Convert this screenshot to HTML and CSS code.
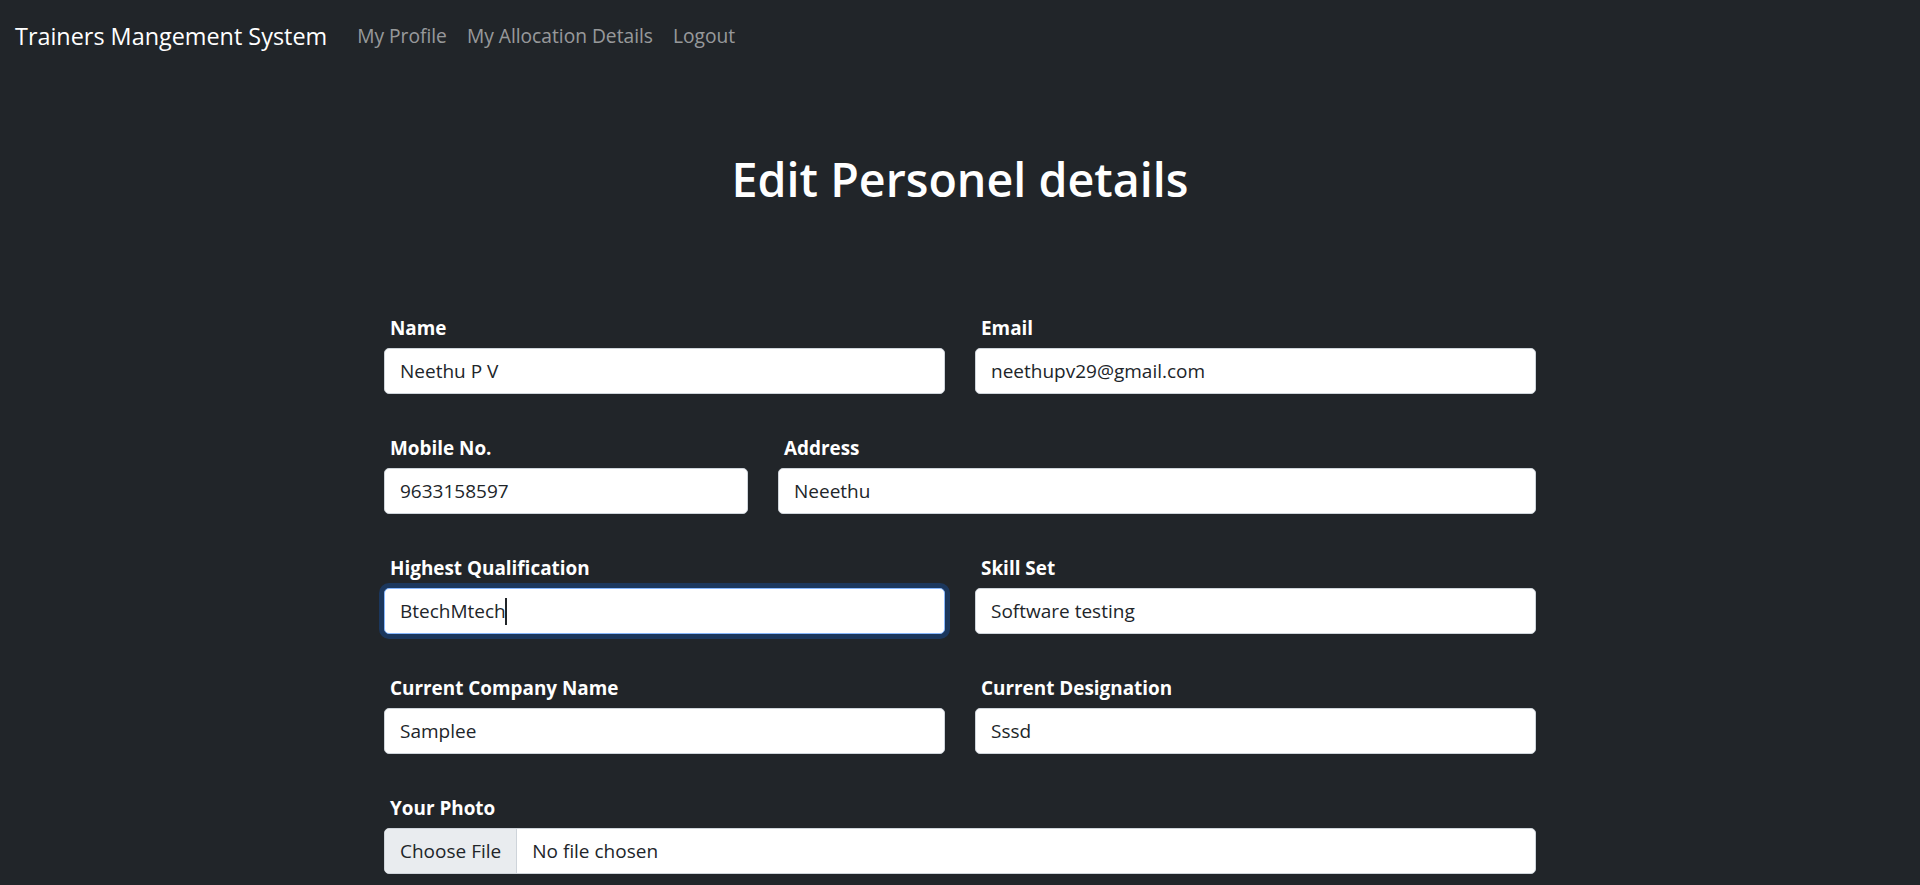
FILE: index.html
```html
<!DOCTYPE html>
<html lang="en">
<head>
<meta charset="utf-8">
<title>Edit Personel details</title>
<link rel="stylesheet" href="styles.css">
</head>
<body>
<nav class="navbar">
  <a class="brand" href="#">Trainers Mangement System</a>
  <ul class="nav">
    <li><a class="nav-link" href="#">My Profile</a></li>
    <li><a class="nav-link" href="#">My Allocation Details</a></li>
    <li><a class="nav-link" href="#">Logout</a></li>
  </ul>
</nav>
<main class="page">
  <h1 class="title">Edit Personel details</h1>
  <form class="form">
    <div class="field span-6">
      <label class="label" for="name">Name</label>
      <input class="control" id="name" type="text" value="Neethu P V">
    </div>
    <div class="field span-6">
      <label class="label" for="email">Email</label>
      <input class="control" id="email" type="email" value="neethupv29@gmail.com">
    </div>
    <div class="field span-4">
      <label class="label" for="mobile">Mobile No.</label>
      <input class="control" id="mobile" type="text" value="9633158597">
    </div>
    <div class="field span-8">
      <label class="label" for="address">Address</label>
      <input class="control" id="address" type="text" value="Neeethu">
    </div>
    <div class="field span-6">
      <label class="label" for="qual">Highest Qualification</label>
      <div class="control-wrap">
        <input class="control focused" id="qual" type="text" value="BtechMtech">
        <span class="caret"></span>
      </div>
    </div>
    <div class="field span-6">
      <label class="label" for="skill">Skill Set</label>
      <input class="control" id="skill" type="text" value="Software testing">
    </div>
    <div class="field span-6">
      <label class="label" for="company">Current Company Name</label>
      <input class="control" id="company" type="text" value="Samplee">
    </div>
    <div class="field span-6">
      <label class="label" for="desig">Current Designation</label>
      <input class="control" id="desig" type="text" value="Sssd">
    </div>
    <div class="field span-12">
      <label class="label" for="photo">Your Photo</label>
      <input class="control file" id="photo" type="file">
    </div>
  </form>
</main>
</body>
</html>
```

FILE: styles.css
```css
* { box-sizing: border-box; }

html, body {
  margin: 0;
  padding: 0;
}

body {
  background: #212529;
  color: #ffffff;
  font-family: "Open Sans", "Noto Sans", "Liberation Sans", sans-serif;
  font-size: 19px;
  line-height: 1.5;
}

.navbar {
  display: flex;
  align-items: center;
  height: 70px;
  padding: 2px 15px 0;
}

.brand {
  color: #ffffff;
  text-decoration: none;
  font-size: 23.4px;
  line-height: 37px;
  margin-right: 20px;
}

.nav {
  display: flex;
  list-style: none;
  margin: 0;
  padding: 0;
}

.nav-link {
  display: block;
  padding: 10px 10px;
  color: rgba(255, 255, 255, 0.55);
  text-decoration: none;
  font-size: 19.2px;
  line-height: 30px;
}

.page {
  padding-bottom: 40px;
}

.title {
  margin: 79px 0 0;
  text-align: center;
  font-size: 46.6px;
  font-weight: 600;
  line-height: 60px;
}

.form {
  width: 1152px;
  margin: 104px auto 0;
  display: grid;
  grid-template-columns: repeat(12, 1fr);
  column-gap: 30px;
  row-gap: 39px;
}

.span-4 { grid-column: span 4; }
.span-6 { grid-column: span 6; }
.span-8 { grid-column: span 8; }
.span-12 { grid-column: span 12; }

.field {
  display: flex;
  flex-direction: column;
}

.label {
  display: block;
  font-weight: 700;
  font-size: 18.9px;
  line-height: 30px;
  margin-bottom: 5px;
  padding-left: 6px;
}

.control-wrap {
  position: relative;
}

.control {
  display: block;
  width: 100%;
  height: 46px;
  margin: 0;
  padding: 7px 15px;
  font-family: inherit;
  font-size: 19px;
  line-height: 30px;
  color: #212529;
  background: #ffffff;
  border: 1px solid #ced4da;
  border-radius: 5px;
  outline: none;
}

.control.focused {
  border-color: #86b7fe;
  box-shadow: 0 0 0 5px rgba(13, 110, 253, 0.25);
}

.caret {
  position: absolute;
  left: 121px;
  top: 10px;
  width: 2px;
  height: 27px;
  background: #212529;
}

.control.file {
  padding: 7px 15px;
  overflow: hidden;
}

.control.file::file-selector-button {
  height: 46px;
  margin: -8px 15px -8px -15px;
  padding: 7px 15px;
  font-family: inherit;
  font-size: 19px;
  line-height: 30px;
  color: #212529;
  background: #e9ecef;
  border: 0;
  border-right: 1px solid #ced4da;
  border-radius: 0;
}
```
